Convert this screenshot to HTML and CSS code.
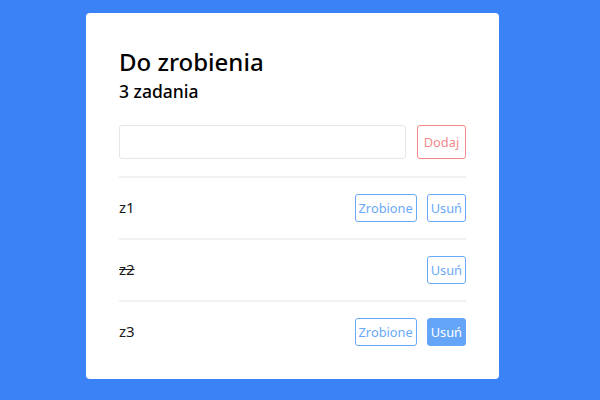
FILE: index.html
```html
<!DOCTYPE html>
<html lang="pl">
<head>
<meta charset="utf-8">
<link rel="stylesheet" href="styles.css">
</head>
<body>
<div class="card">
  <h1 class="title">Do zrobienia</h1>
  <h2 class="count">3 zadania</h2>
  <div class="add">
    <input class="field" type="text">
    <button class="btn btn-red">Dodaj</button>
  </div>
  <ul class="list">
    <li class="item">
      <span class="name">z1</span>
      <div class="actions">
        <button class="btn btn-blue">Zrobione</button>
        <button class="btn btn-blue">Usuń</button>
      </div>
    </li>
    <li class="item">
      <span class="name done">z2</span>
      <div class="actions">
        <button class="btn btn-blue">Usuń</button>
      </div>
    </li>
    <li class="item">
      <span class="name">z3</span>
      <div class="actions">
        <button class="btn btn-blue">Zrobione</button>
        <button class="btn btn-blue btn-filled">Usuń</button>
      </div>
    </li>
  </ul>
</div>
</body>
</html>
```
FILE: styles.css
```css
html, body {
  margin: 0;
  padding: 0;
  height: 100%;
}
body {
  background: #3b82f6;
  font-family: "Noto Sans", "Open Sans", sans-serif;
  color: #000;
  overflow: hidden;
}
.card {
  box-sizing: border-box;
  width: 413px;
  margin: 13px 0 0 86px;
  background: #fff;
  border-radius: 4px;
  padding: 33px 33px 17px;
}
.title {
  margin: 0;
  font-size: 24px;
  font-weight: 500;
  line-height: 32px;
  color: #000;
}
.count {
  margin: 0;
  font-size: 17.5px;
  font-weight: 500;
  line-height: 26px;
  color: #000;
}
.add {
  display: flex;
  gap: 11px;
  margin-top: 21px;
  padding-bottom: 17px;
  border-bottom: 2px solid #f1f1f1;
}
.field {
  flex: 1;
  height: 34px;
  box-sizing: border-box;
  border: 1px solid #e6e6e6;
  border-radius: 3px;
  outline: none;
  padding: 0 8px;
}
.btn {
  font-family: inherit;
  background: #fff;
  border-radius: 3px;
  font-size: 12.8px;
  cursor: pointer;
}
.btn-red {
  height: 34px;
  width: 49px;
  padding: 0;
  border: 1px solid #f38a8a;
  color: #f38a8a;
}
.list {
  list-style: none;
  margin: 0;
  padding: 0;
}
.item {
  display: flex;
  align-items: center;
  justify-content: space-between;
  height: 60px;
  border-bottom: 2px solid #f1f1f1;
}
.item:last-child {
  border-bottom: none;
}
.name {
  font-size: 15px;
  line-height: 18px;
  color: #1a1a1a;
  margin-top: -3px;
}
.done {
  text-decoration: line-through;
}
.actions {
  display: flex;
  gap: 10px;
}
.btn-blue {
  height: 28px;
  padding: 0 3px;
  border: 1px solid #6aa9f7;
  color: #6aa9f7;
}
.btn-filled {
  background: #64a5f8;
  border-color: #64a5f8;
  color: #fff;
}
```
